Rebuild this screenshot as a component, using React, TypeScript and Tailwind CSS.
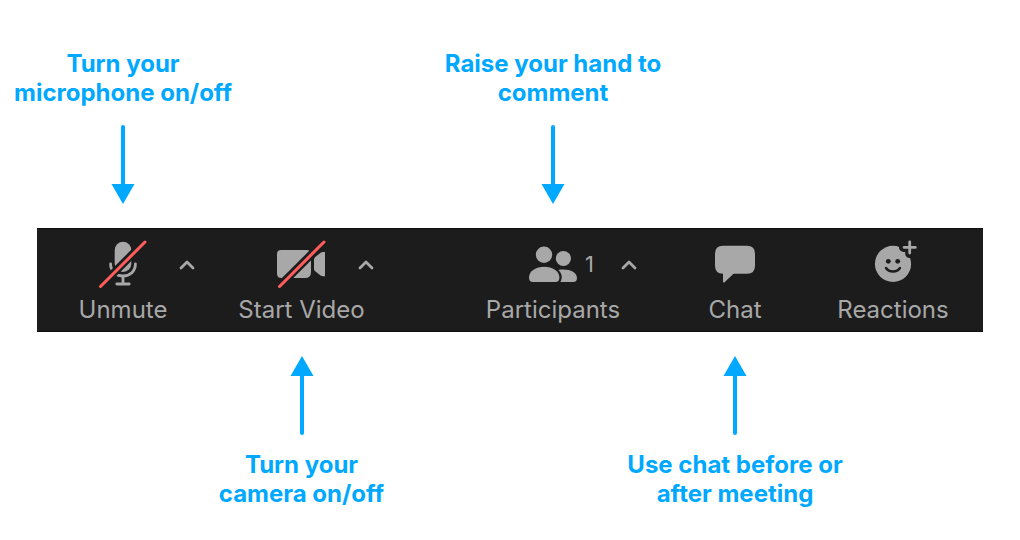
import type { ReactNode } from "react";

const COLUMNS =
  "grid grid-cols-[minmax(0,172fr)_minmax(0,185fr)_minmax(0,62fr)_minmax(0,194fr)_minmax(0,170fr)_minmax(0,146fr)_minmax(0,17fr)]";

function Icon({ children }: { children: ReactNode }) {
  return (
    <svg viewBox="0 0 48 48" className="col-start-2 size-12 overflow-visible" fill="currentColor" aria-hidden="true">
      {children}
    </svg>
  );
}

function Slash() {
  return (
    <>
      <path d="M-1 48.7 48.5-.8" stroke="#1c1c1c" strokeWidth="8" />
      <path d="M1.5 46.5 46 2" stroke="#ff5c5c" strokeWidth="3" strokeLinecap="round" />
    </>
  );
}

function MicIcon() {
  return (
    <Icon>
      <rect x="15.7" y="1.7" width="16.6" height="30.3" rx="8.3" />
      <path
        d="M11.6 24C11.6 31.2 17 35.9 24 35.9S36.4 31.2 36.4 24M24 36V44M17.8 44H30.2"
        fill="none"
        stroke="currentColor"
        strokeWidth="2.8"
        strokeLinecap="round"
      />
      <Slash />
    </Icon>
  );
}

function CameraIcon() {
  return (
    <Icon>
      <path d="M3 10H28.5Q33 10 33 14.5V32Q33 38 27 38H3.5Q-1 38-1 33.5V14Q-1 10 3 10Z" />
      <path d="M36 19.6Q36 18 37.2 17L42.6 12.8Q43.6 12 45 12H47V36.3H45Q43.6 36.3 42.6 35.5L37.2 31.3Q36 30.3 36 28.7Z" />
      <Slash />
    </Icon>
  );
}

function PeopleIcon() {
  return (
    <Icon>
      <circle cx="15" cy="14.8" r="8.2" />
      <circle cx="34.4" cy="18.5" r="7.6" />
      <path d="M4 42Q0 42 0 37.5C0 30.8 7 26.7 15.2 26.7S30.4 30.8 30.4 37.5Q30.4 42 26.4 42Z" />
      <path d="M29.5 29.9C31 29.7 32.4 29.6 34 29.6C42.2 29.6 48 33 48 38.3Q48 42 44.3 42H31.3C33.7 38.2 33.2 33.5 29.5 29.9Z" />
    </Icon>
  );
}

function ChatIcon() {
  return (
    <Icon>
      <path d="M12 5.7H36Q44 5.7 44 13.7V25.7Q44 33.7 36 33.7H22.5L13.6 42.2Q12 43.3 12 41.3V33.7Q4 33.7 4 25.7V13.7Q4 5.7 12 5.7Z" />
    </Icon>
  );
}

function ReactionIcon() {
  return (
    <Icon>
      <circle cx="24" cy="23.9" r="18.1" />
      <path d="M40.7 1.5V13.5M34.5 7.4H46.5" stroke="#1c1c1c" strokeWidth="9" strokeLinecap="round" />
      <path d="M40.7 1.8V13M35.1 7.4H46.3" stroke="currentColor" strokeWidth="2.8" strokeLinecap="round" />
      <circle cx="19.3" cy="21.3" r="2.4" fill="#1c1c1c" />
      <circle cx="28.7" cy="21.3" r="2.4" fill="#1c1c1c" />
      <path d="M17 28C20 32.6 28 32.6 31 28" fill="none" stroke="#1c1c1c" strokeWidth="2.4" strokeLinecap="round" />
    </Icon>
  );
}

function Arrow({ up = false }: { up?: boolean }) {
  return (
    <svg viewBox="0 0 24 79" className={up ? "h-[79px] w-6" : "h-[79px] w-6 rotate-180"} aria-hidden="true">
      <path d="M12 0 23.5 20H.5Z" fill="currentColor" />
      <path d="M12 18V77" stroke="currentColor" strokeWidth="4" strokeLinecap="round" />
    </svg>
  );
}

function Note({ lines, column, up = false }: { lines: [string, string]; column: string; up?: boolean }) {
  return (
    <div className={`${column} flex items-center ${up ? "flex-col-reverse gap-[15px]" : "flex-col gap-[18px]"}`}>
      <p className="text-center text-2xl leading-[29px] font-bold whitespace-nowrap">
        {lines[0]}
        <br />
        {lines[1]}
      </p>
      <Arrow up={up} />
    </div>
  );
}

type ToolProps = {
  label: string;
  icon: ReactNode;
  column: string;
  count?: number;
  menu?: string;
};

function Tool({ label, icon, column, count, menu }: ToolProps) {
  return (
    <div className={`${column} grid grid-cols-[minmax(0,1fr)_48px_minmax(0,1fr)] grid-rows-[48px_auto]`}>
      <button
        type="button"
        className="col-span-3 col-start-1 row-span-2 row-start-1 grid grid-cols-subgrid items-center gap-y-2"
      >
        {icon}
        {count !== undefined && <span className="col-start-3 pl-2 text-left text-[22px] leading-7">{count}</span>}
        <span className="col-span-3 col-start-1 justify-self-center text-2xl leading-7 whitespace-nowrap">{label}</span>
      </button>
      {menu && (
        <button
          type="button"
          aria-label={menu}
          className={`col-start-3 row-start-1 self-center justify-self-start ${count !== undefined ? "ml-11" : "ml-8"}`}
        >
          <svg viewBox="0 0 16 16" className="size-4" fill="none" aria-hidden="true">
            <path d="M2 12 8 6 14 12" stroke="currentColor" strokeWidth="2.8" strokeLinecap="round" strokeLinejoin="round" />
          </svg>
        </button>
      )}
    </div>
  );
}

export default function App() {
  return (
    <main className="min-h-screen overflow-hidden bg-white px-[37px] pt-[49px] pb-8 font-['Inter','Liberation_Sans',sans-serif] text-[#00a8ff]">
      <div className={COLUMNS}>
        <Note column="col-start-1" lines={["Turn your", "microphone on/off"]} />
        <Note column="col-start-4" lines={["Raise your hand to", "comment"]} />
      </div>
      <div
        role="toolbar"
        aria-label="Meeting controls"
        className={`${COLUMNS} my-6 border-y border-[#101010] bg-[#1c1c1c] pt-[11px] pb-[7px] text-[#a8a8a8]`}
      >
        <Tool column="col-start-1" label="Unmute" icon={<MicIcon />} menu="Audio options" />
        <Tool column="col-start-2" label="Start Video" icon={<CameraIcon />} menu="Video options" />
        <Tool column="col-start-4" label="Participants" icon={<PeopleIcon />} count={1} menu="Participant options" />
        <Tool column="col-start-5" label="Chat" icon={<ChatIcon />} />
        <Tool column="col-start-6" label="Reactions" icon={<ReactionIcon />} />
      </div>
      <div className={COLUMNS}>
        <Note column="col-start-2" lines={["Turn your", "camera on/off"]} up />
        <Note column="col-start-5" lines={["Use chat before or", "after meeting"]} up />
      </div>
    </main>
  );
}
